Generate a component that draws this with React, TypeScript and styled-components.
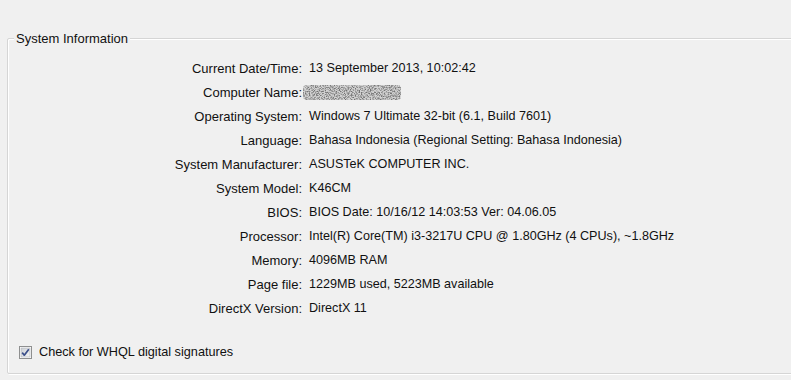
import React from "react";
import styled, { createGlobalStyle } from "styled-components";

const Global = createGlobalStyle`
  html, body { margin: 0; padding: 0; background: #f0f0f0; }
  body { font-family: "Liberation Sans", Arial, sans-serif; font-size: 13px; color: #111; overflow: hidden; }
`;

const Page = styled.div`
  width: 791px;
  height: 380px;
  padding-top: 38px;
  padding-left: 7px;
  box-sizing: border-box;
  overflow: hidden;
`;

const Group = styled.section`
  position: relative;
  width: 820px;
  height: 336px;
  box-sizing: border-box;
  border: 1px solid #d5d5d5;
  border-radius: 2px;
  box-shadow: inset 1px 1px 0 #ffffff, 1px 1px 0 #ffffff;
  padding: 17px 0 0 0;
`;

const Legend = styled.div`
  position: absolute;
  left: 6px;
  top: -8px;
  padding: 0 2px;
  background: #f0f0f0;
  line-height: 16px;
`;

const Grid = styled.div`
  display: grid;
  grid-template-columns: 294px auto;
  column-gap: 7px;
  grid-auto-rows: 24px;
  align-items: center;
`;

const Label = styled.div`
  text-align: right;
  white-space: nowrap;
`;

const Value = styled.div`
  white-space: nowrap;
  font-size: 12.6px;
`;

const Blurred = styled.span`
  display: inline-block;
  margin-left: -6px;
  width: 98px;
  height: 15px;
  vertical-align: middle;
`;

const CheckRow = styled.label`
  display: flex;
  align-items: center;
  gap: 7px;
  margin-top: 20px;
  padding-left: 11px;
  height: 24px;
  font-size: 12.7px;
`;

const Box = styled.span`
  display: inline-flex;
  width: 13px;
  height: 13px;
`;

const rows: [string, string | null][] = [
  ["Current Date/Time:", "13 September 2013, 10:02:42"],
  ["Computer Name:", null],
  ["Operating System:", "Windows 7 Ultimate 32-bit (6.1, Build 7601)"],
  ["Language:", "Bahasa Indonesia (Regional Setting: Bahasa Indonesia)"],
  ["System Manufacturer:", "ASUSTeK COMPUTER INC."],
  ["System Model:", "K46CM"],
  ["BIOS:", "BIOS Date: 10/16/12 14:03:53 Ver: 04.06.05"],
  ["Processor:", "Intel(R) Core(TM) i3-3217U CPU @ 1.80GHz (4 CPUs), ~1.8GHz"],
  ["Memory:", "4096MB RAM"],
  ["Page file:", "1229MB used, 5223MB available"],
  ["DirectX Version:", "DirectX 11"],
];

function Noise() {
  return (
    <svg width="98" height="15" viewBox="0 0 98 15">
      <defs>
        <filter id="nz" x="0" y="0" width="100%" height="100%" colorInterpolationFilters="sRGB">
          <feTurbulence type="fractalNoise" baseFrequency="0.8" numOctaves="2" seed="7" result="t" />
          <feColorMatrix
            in="t"
            type="matrix"
            values="0 0 0 0 0.45  0 0 0 0 0.45  0 0 0 0 0.45  3.2 0 0 0 -1.3"
          />
          <feGaussianBlur stdDeviation="0.35" />
          <feComposite in2="SourceGraphic" operator="in" />
        </filter>
      </defs>
      <rect x="0" y="0" width="98" height="15" rx="4" fill="#d2d2d2" />
      <rect x="0" y="0" width="98" height="15" rx="4" fill="#000" filter="url(#nz)" />
    </svg>
  );
}

export default function App() {
  return (
    <Page>
      <Global />
      <Group>
        <Legend>System Information</Legend>
        <Grid>
          {rows.map(([l, v]) => (
            <React.Fragment key={l}>
              <Label>{l}</Label>
              <Value>
                {v === null ? (
                  <Blurred>
                    <Noise />
                  </Blurred>
                ) : (
                  v
                )}
              </Value>
            </React.Fragment>
          ))}
        </Grid>
        <CheckRow>
          <Box>
            <svg width="13" height="13" viewBox="0 0 13 13">
              <defs>
                <linearGradient id="cb" x1="0" y1="0" x2="1" y2="1">
                  <stop offset="0" stopColor="#cbcfd5" />
                  <stop offset="1" stopColor="#f6f6f6" />
                </linearGradient>
              </defs>
              <rect x="0.5" y="0.5" width="12" height="12" fill="#fff" stroke="#8e8f8f" />
              <rect x="2" y="2" width="9" height="9" fill="url(#cb)" stroke="#aeb3b9" strokeWidth="0.6" />
              <path d="M3.2 6.6 L5.3 9.2 L9.8 3.2" fill="none" stroke="#3b4f8a" strokeWidth="1.7" strokeLinejoin="round" />
            </svg>
          </Box>
          Check for WHQL digital signatures
        </CheckRow>
      </Group>
    </Page>
  );
}
